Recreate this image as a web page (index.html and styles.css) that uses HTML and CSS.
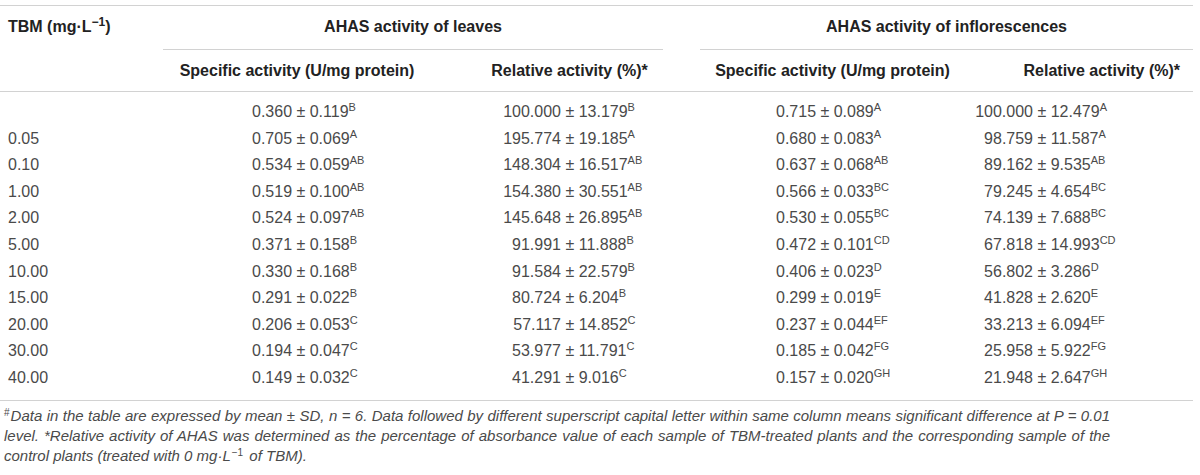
FILE: index.html
```html
<!DOCTYPE html>
<html>
<head>
<meta charset="utf-8">
<link rel="stylesheet" href="styles.css">
</head>
<body>
<div class="wrap">
<table class="data">
  <colgroup>
    <col class="c1"><col class="c2"><col class="c3"><col class="c4"><col class="c5">
  </colgroup>
  <thead>
    <tr class="head1">
      <th rowspan="2" class="tbm">TBM (mg·L<sup>−1</sup>)</th>
      <th colspan="2" class="grp grp-l"><div class="grp-label">AHAS activity of leaves</div></th>
      <th colspan="2" class="grp grp-r"><div class="grp-label">AHAS activity of inflorescences</div></th>
    </tr>
    <tr class="head2">
      <th class="h-spec-l">Specific activity (U/mg protein)</th>
      <th class="h-rel-l">Relative activity (%)*</th>
      <th class="h-spec-r">Specific activity (U/mg protein)</th>
      <th class="h-rel-r">Relative activity (%)*</th>
    </tr>
  </thead>
  <tbody>
    <tr><td class="dose"></td><td class="v2"><span class="n">0.360</span> ± 0.119<sup>B</sup></td><td class="v3"><span class="n">100.000</span> ± 13.179<sup>B</sup></td><td class="v4"><span class="n">0.715</span> ± 0.089<sup>A</sup></td><td class="v5"><span class="n">100.000</span> ± 12.479<sup>A</sup></td></tr>
    <tr><td class="dose">0.05</td><td class="v2"><span class="n">0.705</span> ± 0.069<sup>A</sup></td><td class="v3"><span class="n">195.774</span> ± 19.185<sup>A</sup></td><td class="v4"><span class="n">0.680</span> ± 0.083<sup>A</sup></td><td class="v5"><span class="n">98.759</span> ± 11.587<sup>A</sup></td></tr>
    <tr><td class="dose">0.10</td><td class="v2"><span class="n">0.534</span> ± 0.059<sup>AB</sup></td><td class="v3"><span class="n">148.304</span> ± 16.517<sup>AB</sup></td><td class="v4"><span class="n">0.637</span> ± 0.068<sup>AB</sup></td><td class="v5"><span class="n">89.162</span> ± 9.535<sup>AB</sup></td></tr>
    <tr><td class="dose">1.00</td><td class="v2"><span class="n">0.519</span> ± 0.100<sup>AB</sup></td><td class="v3"><span class="n">154.380</span> ± 30.551<sup>AB</sup></td><td class="v4"><span class="n">0.566</span> ± 0.033<sup>BC</sup></td><td class="v5"><span class="n">79.245</span> ± 4.654<sup>BC</sup></td></tr>
    <tr><td class="dose">2.00</td><td class="v2"><span class="n">0.524</span> ± 0.097<sup>AB</sup></td><td class="v3"><span class="n">145.648</span> ± 26.895<sup>AB</sup></td><td class="v4"><span class="n">0.530</span> ± 0.055<sup>BC</sup></td><td class="v5"><span class="n">74.139</span> ± 7.688<sup>BC</sup></td></tr>
    <tr><td class="dose">5.00</td><td class="v2"><span class="n">0.371</span> ± 0.158<sup>B</sup></td><td class="v3"><span class="n">91.991</span> ± 11.888<sup>B</sup></td><td class="v4"><span class="n">0.472</span> ± 0.101<sup>CD</sup></td><td class="v5"><span class="n">67.818</span> ± 14.993<sup>CD</sup></td></tr>
    <tr><td class="dose">10.00</td><td class="v2"><span class="n">0.330</span> ± 0.168<sup>B</sup></td><td class="v3"><span class="n">91.584</span> ± 22.579<sup>B</sup></td><td class="v4"><span class="n">0.406</span> ± 0.023<sup>D</sup></td><td class="v5"><span class="n">56.802</span> ± 3.286<sup>D</sup></td></tr>
    <tr><td class="dose">15.00</td><td class="v2"><span class="n">0.291</span> ± 0.022<sup>B</sup></td><td class="v3"><span class="n">80.724</span> ± 6.204<sup>B</sup></td><td class="v4"><span class="n">0.299</span> ± 0.019<sup>E</sup></td><td class="v5"><span class="n">41.828</span> ± 2.620<sup>E</sup></td></tr>
    <tr><td class="dose">20.00</td><td class="v2"><span class="n">0.206</span> ± 0.053<sup>C</sup></td><td class="v3"><span class="n">57.117</span> ± 14.852<sup>C</sup></td><td class="v4"><span class="n">0.237</span> ± 0.044<sup>EF</sup></td><td class="v5"><span class="n">33.213</span> ± 6.094<sup>EF</sup></td></tr>
    <tr><td class="dose">30.00</td><td class="v2"><span class="n">0.194</span> ± 0.047<sup>C</sup></td><td class="v3"><span class="n">53.977</span> ± 11.791<sup>C</sup></td><td class="v4"><span class="n">0.185</span> ± 0.042<sup>FG</sup></td><td class="v5"><span class="n">25.958</span> ± 5.922<sup>FG</sup></td></tr>
    <tr><td class="dose">40.00</td><td class="v2"><span class="n">0.149</span> ± 0.032<sup>C</sup></td><td class="v3"><span class="n">41.291</span> ± 9.016<sup>C</sup></td><td class="v4"><span class="n">0.157</span> ± 0.020<sup>GH</sup></td><td class="v5"><span class="n">21.948</span> ± 2.647<sup>GH</sup></td></tr>
  </tbody>
</table>
<div class="note">
  <span class="note-line just"><span class="hash">#</span>Data in the table are expressed by mean ± SD, n = 6. Data followed by different superscript capital letter within same column means significant difference at P = 0.01</span>
  <span class="note-line just">level. *Relative activity of AHAS was determined as the percentage of absorbance value of each sample of TBM-treated plants and the corresponding sample of the</span>
  <span class="note-line">control plants (treated with 0 mg·L<span class="exp">−1</span> of TBM).</span>
</div>
</div>
</body>
</html>
```

FILE: styles.css
```css
html, body {
  margin: 0;
  padding: 0;
  background: #ffffff;
}

body {
  font-family: "Liberation Sans", Arial, sans-serif;
  color: #4a4a4a;
}

.wrap {
  width: 1193px;
  padding-top: 5px;
}

.data {
  width: 1193px;
  table-layout: fixed;
  border-collapse: collapse;
  border-spacing: 0;
  border-top: 1px solid #d2d2d2;
  border-bottom: 1px solid #d2d2d2;
}

.c1 { width: 163px; }
.c2 { width: 268px; }
.c3 { width: 269px; }
.c4 { width: 265px; }
.c5 { width: 228px; }

th {
  font-weight: bold;
  font-size: 16px;
  line-height: 20px;
  color: #222222;
  padding: 0;
}

th sup {
  font-size: 12px;
  line-height: 0;
  vertical-align: 6px;
}

.tbm {
  text-align: left;
  vertical-align: top;
  padding: 11px 0 0 8px;
  border-bottom: 1px solid #d2d2d2;
}

.grp {
  padding: 0;
  vertical-align: bottom;
}

.grp-l { padding-right: 37px; }

.grp-label {
  padding: 11px 0 12px;
  border-bottom: 1px solid #d2d2d2;
  text-align: center;
}

.head2 th {
  padding: 11px 0 10px;
  border-bottom: 1px solid #d2d2d2;
  text-align: center;
}

.head2 .h-rel-l {
  padding-left: 8px;
}

.head2 .h-rel-r {
  text-align: right;
  padding-right: 13px;
}

td {
  font-size: 16px;
  line-height: 26.6px;
  padding: 0;
  text-align: left;
  white-space: nowrap;
}

tbody tr:first-child td { padding-top: 7px; }
tbody tr:last-child td { padding-bottom: 8px; }

td sup {
  font-size: 11px;
  line-height: 0;
  vertical-align: 6px;
}

.dose { padding-left: 8px; }

.n {
  display: inline-block;
  text-align: right;
}

.v2 { padding-left: 89px; }
.v2 .n { width: 40px; }
.v3 { padding-left: 72px; }
.v3 .n { width: 58px; }
.v4 { padding-left: 76px; }
.v4 .n { width: 40px; }
.v5 { padding-left: 10px; }
.v5 .n { width: 58px; }

.note {
  margin: 5px 0 0;
  padding-left: 4px;
  width: 1106px;
  font-size: 15px;
  line-height: 20px;
  font-style: italic;
  color: #4a4a4a;
}

.note-line {
  display: block;
  white-space: nowrap;
}

.note-line.just {
  text-align: justify;
  text-align-last: justify;
  white-space: normal;
}

.hash {
  display: inline-block;
  font-style: normal;
  font-size: 10px;
  line-height: 10px;
  vertical-align: 5px;
  margin-right: 1px;
}

.exp {
  display: inline-block;
  font-style: normal;
  font-size: 10px;
  line-height: 10px;
  vertical-align: 5px;
  margin: 0 2px 0 1px;
}
```
